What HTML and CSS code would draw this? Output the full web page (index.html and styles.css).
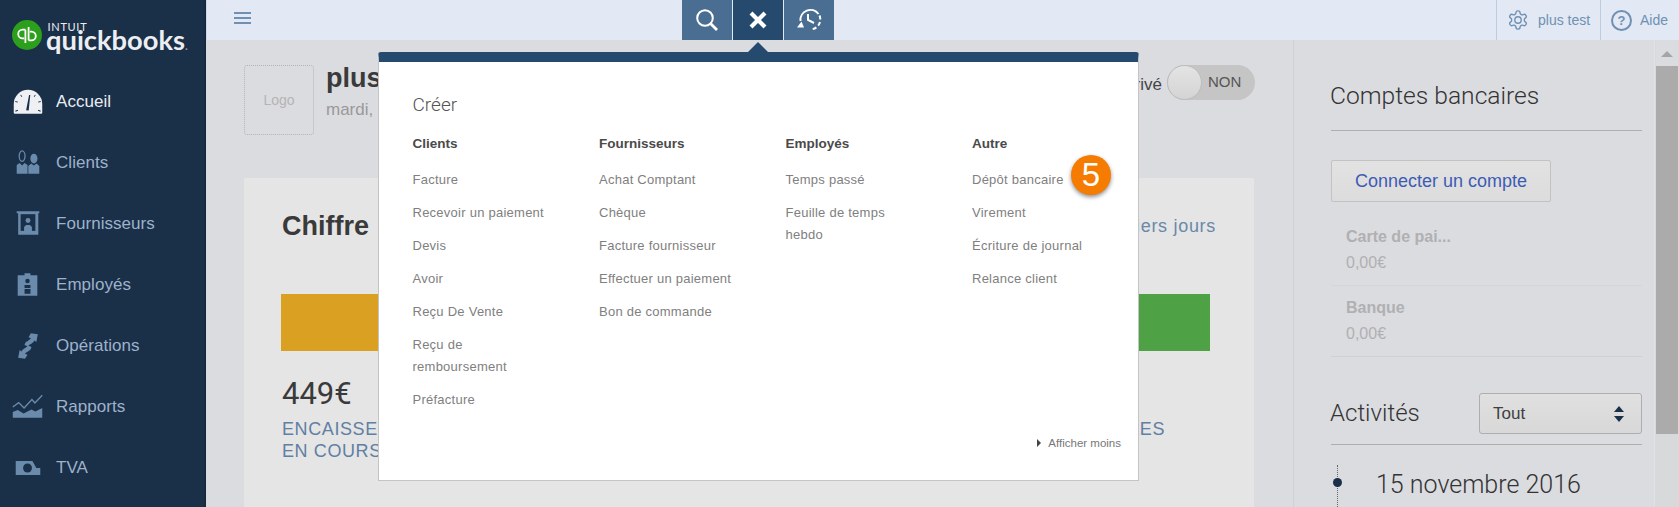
FILE: index.html
```html
<!DOCTYPE html>
<html lang="fr">
<head>
<meta charset="utf-8">
<title>QuickBooks</title>
<link rel="stylesheet" href="styles.css">
</head>
<body>
<div class="app">
  <aside class="sidebar">
    <div class="brand">
      <svg class="brand-mark" width="30" height="30" viewBox="0 0 30 30">
        <circle cx="15" cy="15" r="15" fill="#2ca01c"/>
        <g fill="none" stroke="#fff" stroke-width="1.8">
          <path d="M13.4 9.600H10.600a4.400 4.400 0 0 0 0 8.800h1.600"/>
          <path d="M13.4 9.600v13.400"/>
          <path d="M16.600 20.400h2.800a4.400 4.400 0 0 0 0-8.800h-1.600"/>
          <path d="M16.600 7v13.400"/>
        </g>
      </svg>
      <div class="brand-words">
        <span class="brand-intuit">INTUIT</span>
        <span class="brand-name">quickbooks<small class="brand-dot">.</small></span>
      </div>
    </div>
    <nav class="nav">
      <a class="nav-item nav-item-active">
        <svg class="nav-icon" viewBox="0 0 57 30"><path fill="#eef0f3" d="M14 26V17a14.500 14.500 0 0 1 29 0v9a1 1 0 0 1-1 1H15a1 1 0 0 1-1-1z"/><path fill="#1a2f48" d="M26.600 23.500l3-15.500h1.200l-1.600 15.700zM18 23l-2.500 1 .4.900 2.500-1zM39 23l2.500 1-.4.900-2.500-1zM15.500 15l2.500.6.2-.9-2.500-.6zM41.500 15l-2.500.6-.2-.9 2.500-.6zM20.600 8l1.400 2 .7-.5-1.400-2zM36.400 8l-1.400 2-.7-.5 1.400-2z"/></svg>
        <span>Accueil</span>
      </a>
      <a class="nav-item">
        <svg class="nav-icon" viewBox="0 0 57 30"><g fill="#6a8bab"><path d="M17 26v-9l3-2 2.500 2.500L25 15l3 2v9z"/><path d="M28.800 26v-8l3-2.500 2.700 2 2.700-2 2.800 2.500v8z"/><ellipse cx="34.500" cy="10.500" rx="3.600" ry="5"/></g><ellipse cx="22.500" cy="8" rx="3" ry="5.300" fill="none" stroke="#6a8bab" stroke-width="1.300"/></svg>
        <span>Clients</span>
      </a>
      <a class="nav-item">
        <svg class="nav-icon" viewBox="0 0 57 30"><path fill="#6a8bab" d="M17 2h23v2h-1v22H18.500V4H17z"/><path fill="#1a2f48" d="M21 5h15v17H21z"/><circle cx="28.500" cy="11.500" r="2.500" fill="#6a8bab"/><path fill="#6a8bab" d="M24.500 22v-4l2-2h4l2 2v4z"/></svg>
        <span>Fournisseurs</span>
      </a>
      <a class="nav-item">
        <svg class="nav-icon" viewBox="0 0 57 30"><path fill="#6a8bab" d="M18 5h7V3h6v2h7v21H18z"/><circle cx="28" cy="11" r="2.300" fill="#1a2f48"/><path fill="#1a2f48" d="M25 15h6v3h-6zM25 19h6v5h-6z"/></svg>
        <span>Employés</span>
      </a>
      <a class="nav-item">
        <svg class="nav-icon" viewBox="0 0 57 30"><g fill="#6a8bab"><path d="M25 14c.4-4 5-4.500 6.500-7L29 6l2.500-4L38.500 3 37 11l-2-1.500c-1 3-5 3.500-6.500 6z"/><path d="M32 16c-.4 4-5 4.500-6.500 7L28 24l-2.500 4L18.500 27 20 19l2 1.500c1-3 5-3.500 6.500-6z"/></g></svg>
        <span>Opérations</span>
      </a>
      <a class="nav-item">
        <svg class="nav-icon" viewBox="0 0 57 30"><path fill="none" stroke="#6a8bab" stroke-width="1.400" d="M13 15l6-4.500 5.500 5.500 8-8.500 3 3.500L43 3"/><path fill="#6a8bab" d="M13 26v-6l5-2 6 3.500 8-4 4 2 7-3.500v10z"/></svg>
        <span>Rapports</span>
      </a>
      <a class="nav-item">
        <svg class="nav-icon" viewBox="0 0 57 30"><path fill="#6a8bab" d="M16 8h17l4 7h4v7H16z"/><circle cx="28" cy="15" r="4.500" fill="#1a2f48"/></svg>
        <span>TVA</span>
      </a>
    </nav>
  </aside>

  <div class="content">
    <header class="topbar">
      <div class="hamburger"><i></i><i></i><i></i></div>
      <div class="tabs">
        <div class="tab">
          <svg width="26" height="30" viewBox="0 0 26 30"><circle cx="11" cy="13" r="7.800" fill="none" stroke="#fff" stroke-width="2"/><path d="M16.500 18.500l6.500 6.500" stroke="#fff" stroke-width="2.800" fill="none"/></svg>
        </div>
        <div class="tab tab-active">
          <svg width="20" height="20" viewBox="0 0 20 20"><path d="M3 3l14 14M17 3L3 17" stroke="#fff" stroke-width="4.200" fill="none"/></svg>
        </div>
        <div class="tab">
          <svg width="26" height="30" viewBox="0 0 26 30"><path d="M4.500 16a10 10 0 0 1 18-7" fill="none" stroke="#fff" stroke-width="2"/><path d="M23.500 10.500a10 10 0 0 1-9 13.900" fill="none" stroke="#fff" stroke-width="2" stroke-dasharray="4 2.500"/><path d="M1 22.500h7l-2.500-6z" fill="#fff"/><path d="M12 9v6l6 3" fill="none" stroke="#fff" stroke-width="2"/></svg>
        </div>
      </div>
      <div class="topbar-right">
        <div class="top-link">
          <svg class="gear" width="22" height="22" viewBox="0 0 24 24" fill="none" stroke="#6f90b3" stroke-width="1.500"><path d="M12.220 2h-.44a2 2 0 0 0-2 2v.18a2 2 0 0 1-1 1.730l-.43.25a2 2 0 0 1-2 0l-.15-.08a2 2 0 0 0-2.730.73l-.22.38a2 2 0 0 0 .73 2.730l.15.1a2 2 0 0 1 1 1.720v.51a2 2 0 0 1-1 1.740l-.15.09a2 2 0 0 0-.73 2.730l.22.38a2 2 0 0 0 2.730.73l.15-.08a2 2 0 0 1 2 0l.43.25a2 2 0 0 1 1 1.730V20a2 2 0 0 0 2 2h.44a2 2 0 0 0 2-2v-.18a2 2 0 0 1 1-1.730l.43-.25a2 2 0 0 1 2 0l.15.08a2 2 0 0 0 2.730-.73l.22-.39a2 2 0 0 0-.73-2.730l-.15-.08a2 2 0 0 1-1-1.740v-.5a2 2 0 0 1 1-1.740l.15-.09a2 2 0 0 0 .73-2.730l-.22-.38a2 2 0 0 0-2.730-.73l-.15.08a2 2 0 0 1-2 0l-.43-.25a2 2 0 0 1-1-1.730V4a2 2 0 0 0-2-2z"/><circle cx="12" cy="12" r="3.500"/></svg>
          <span>plus test</span>
        </div>
        <div class="top-link top-link-help">
          <span class="help-icon">?</span>
          <span>Aide</span>
        </div>
      </div>
    </header>

    <div class="workspace">
      <main class="main">
        <div class="company">
          <div class="logo-box">Logo</div>
          <div class="company-text">
            <div class="company-name">plus</div>
            <div class="company-date">mardi,</div>
          </div>
          <div class="privacy">
            <span class="privacy-label">Mode privé</span>
            <div class="toggle"><span class="toggle-knob"></span><span class="toggle-text">NON</span></div>
          </div>
        </div>
        <section class="card">
          <div class="card-head">
            <h2 class="card-title">Chiffre</h2>
            <span class="card-range">derniers jours</span>
          </div>
          <div class="bar">
            <div class="bar-yellow"></div>
            <div class="bar-green"></div>
          </div>
          <div class="stats">
            <div>
              <div class="stat-value">449€</div>
              <div class="stat-label">ENCAISSEMENTS<br>EN COURS</div>
            </div>
            <div class="stat-right">
              <div class="stat-value">&nbsp;</div>
              <div class="stat-label">RÉELLES</div>
            </div>
          </div>
        </section>
      </main>

      <section class="panel">
        <h2 class="panel-title">Comptes bancaires</h2>
        <button class="connect" type="button">Connecter un compte</button>
        <div class="account">
          <div class="account-name">Carte de pai...</div>
          <div class="account-value">0,00€</div>
        </div>
        <div class="account">
          <div class="account-name">Banque</div>
          <div class="account-value">0,00€</div>
        </div>
        <div class="activity-head">
          <h2 class="panel-title-plain">Activités</h2>
          <div class="select"><span>Tout</span><span class="select-caret"></span></div>
        </div>
        <div class="timeline">
          <span class="timeline-dot"></span>
          <span class="timeline-date">15 novembre 2016</span>
        </div>
      </section>

      <div class="scrollbar">
        <div class="scroll-up"><i></i></div>
        <div class="scroll-thumb"></div>
      </div>
    </div>
  </div>

  <span class="popup-arrow"></span>
  <div class="popup">
    <h3 class="popup-title">Créer</h3>
    <div class="popup-cols">
      <div class="popup-col">
        <h4>Clients</h4>
        <ul>
          <li>Facture</li>
          <li>Recevoir un paiement</li>
          <li>Devis</li>
          <li>Avoir</li>
          <li>Reçu De Vente</li>
          <li>Reçu de remboursement</li>
          <li>Préfacture</li>
        </ul>
      </div>
      <div class="popup-col">
        <h4>Fournisseurs</h4>
        <ul>
          <li>Achat Comptant</li>
          <li>Chèque</li>
          <li>Facture fournisseur</li>
          <li>Effectuer un paiement</li>
          <li>Bon de commande</li>
        </ul>
      </div>
      <div class="popup-col">
        <h4>Employés</h4>
        <ul>
          <li>Temps passé</li>
          <li>Feuille de temps hebdo</li>
        </ul>
      </div>
      <div class="popup-col">
        <h4>Autre</h4>
        <ul>
          <li>Dépôt bancaire</li>
          <li>Virement</li>
          <li>Écriture de journal</li>
          <li>Relance client</li>
        </ul>
      </div>
    </div>
    <div class="popup-foot"><span class="foot-caret"></span>Afficher moins</div>
  </div>
  <span class="step-badge">5</span>
</div>
</body>
</html>
```

FILE: styles.css
```css
* { box-sizing: border-box; }
html, body { margin: 0; padding: 0; height: 100%; overflow: hidden; }
body { font-family: "Liberation Sans", Arial, sans-serif; color: #3f3f3f; background: #dbdce0; }
h2, h3, h4, ul { margin: 0; padding: 0; font-weight: normal; }
ul { list-style: none; }

.app { position: relative; display: flex; width: 1679px; height: 507px; overflow: hidden; }

/* Sidebar */
.sidebar { flex: 0 0 206px; background: #1a2f48; box-shadow: inset -2px 0 2px -1px #14263a; }
.brand { height: 71px; display: flex; padding: 20px 0 0 12px; }
.brand-mark { flex: none; }
.brand-words { display: flex; flex-direction: column; margin-left: 4px; color: #eceef1; }
.brand-intuit { font: 400 11px/10px "Lato", sans-serif; letter-spacing: .7px; height: 10px; margin: 2px 0 0 1.500px; }
.brand-name { font: 700 27.300px/28px "Lato", sans-serif; margin-top: -6px; white-space: nowrap; }
.brand-dot { font-size: 12px; color: #8a9bb0; }
.nav-item { display: flex; align-items: center; height: 61px; color: #9db2cb; font-size: 17px; letter-spacing: .05px; }
.nav-item-active { color: #e9edf2; }
.nav-icon { flex: none; width: 56px; height: 30px; overflow: visible; }

/* Top bar */
.content { flex: 1; min-width: 0; display: flex; flex-direction: column; }
.topbar { flex: 0 0 40px; display: flex; background: #e2e9f4; border-left: 1px solid #cfd9e6; }
.hamburger { width: 17px; margin: 12px 0 0 27px; display: flex; flex-direction: column; gap: 3px; }
.hamburger i { display: block; height: 2px; background: #6f90b3; }
.tabs { display: flex; margin-left: 431px; gap: 1px; }
.tab { width: 50px; height: 40px; background: #4a6d92; display: flex; align-items: center; justify-content: center; }
.tab-active { background: #264a6e; }
.topbar-right { margin-left: auto; display: flex; font-size: 14px; color: #6f90b3; }
.top-link { display: flex; align-items: center; gap: 9px; width: 104px; padding-left: 10px; border-left: 1px solid #bccde0; }
.top-link-help { width: 79px; gap: 8px; }
.help-icon { flex: none; width: 21px; height: 21px; border: 2px solid #6f90b3; border-radius: 50%; display: flex; align-items: center; justify-content: center; font-weight: 700; font-size: 13px; }

/* Main */
.workspace { flex: 1; display: flex; min-height: 0; }
.main { flex: 0 0 1087px; padding: 25px 39px 0 38px; }
.company { display: flex; height: 70px; }
.logo-box { width: 70px; height: 70px; border: 1px dotted #b3b3b5; border-radius: 3px; display: flex; align-items: center; justify-content: center; color: #b4b4b6; font-size: 14px; }
.company-text { margin: -3px 0 0 12px; }
.company-name { font-size: 27px; font-weight: 700; line-height: 32px; color: #3a3a3a; }
.company-date { margin-top: 5px; font-size: 17px; line-height: 22px; color: #999; }
.privacy { margin: 0 -1px 0 auto; display: flex; align-items: flex-start; gap: 5px; }
.privacy-label { margin-top: 10px; font-size: 17px; line-height: 20px; color: #444; }
.toggle { width: 88px; height: 35px; border-radius: 18px; background: #c5c5c5; display: flex; align-items: center; }
.toggle-knob { width: 35px; height: 35px; border-radius: 50%; background: linear-gradient(#e4e4e4, #d4d4d4); border: 1px solid #bdbdbd; }
.toggle-text { margin: -3px 0 0 6px; font-size: 15px; color: #555; }

.card { margin-top: 43px; height: 340px; background: #e5e5e5; padding: 32px 44px 0 37px; }
.card-head { display: flex; justify-content: space-between; align-items: center; height: 32px; }
.card-title { margin-left: 1px; font-size: 27px; font-weight: 700; color: #3a3a3a; }
.card-range { margin-right: -6px; font-size: 18px; letter-spacing: .7px; color: #6a88a8; }
.bar { display: flex; height: 57px; margin-top: 52px; }
.bar-yellow { flex: 1; background: #d9a022; }
.bar-green { flex: 0 0 300px; background: #4ea145; }
.stats { display: flex; justify-content: space-between; margin-top: 25px; padding-left: 1px; }
.stat-value { font: 400 31px/36px "Roboto", sans-serif; color: #3a3a3a; }
.stat-label { margin-top: 6px; font-size: 18px; line-height: 22px; letter-spacing: .6px; color: #5f7fa3; }
.stat-right { margin-right: 45px; }

/* Right panel */
.panel { flex: 0 0 361px; padding: 40px 12px 0 37px; border-left: 1px solid #cfd0d4; }
.panel-title { font: 300 24.600px/32px "Roboto", sans-serif; color: #333; padding-bottom: 18px; border-bottom: 1px solid #aeaeae; height: 51px; text-indent: -1px; }
.connect { display: block; margin-top: 29px; width: 220px; height: 42px; padding: 0; font: 18px "Liberation Sans", Arial, sans-serif; color: #3c5cb4; background: linear-gradient(#e2e2e3, #dcdcdc); border: 1px solid #c2c2c2; border-radius: 2px; }
.account { padding: 0 0 12px 15px; border-bottom: 1px solid #cfd0d4; margin-top: 12px; }
.connect + .account { margin-top: 25px; border-bottom-color: #d5d6da; }
.account-name { font-size: 16px; font-weight: 700; line-height: 20px; color: #b0b0b2; }
.account-value { margin-top: 6px; font-size: 16px; line-height: 20px; color: #b0b0b2; }
.activity-head { margin-top: 36px; padding-bottom: 10px; border-bottom: 1px solid #aeaeae; display: flex; justify-content: space-between; align-items: center; }
.panel-title-plain { font: 300 24px/30px "Roboto", sans-serif; color: #333; text-indent: -1px; padding-bottom: 2px; }
.select { width: 163px; height: 41px; padding: 0 17px 0 13px; display: flex; align-items: center; justify-content: space-between; border: 1px solid #aeaeae; border-radius: 3px; font-size: 17px; color: #3f3f3f; background: linear-gradient(#e0e0e1, #d8d8d8); }
.select-caret { position: relative; width: 10px; height: 16px; }
.select-caret::before, .select-caret::after { content: ""; position: absolute; left: 0; border-left: 5px solid transparent; border-right: 5px solid transparent; }
.select-caret::before { top: 0; border-bottom: 6px solid #1a2f48; }
.select-caret::after { bottom: 0; border-top: 6px solid #1a2f48; }
.timeline { position: relative; margin-top: 25px; padding-left: 45px; font: 300 25px/30px "Roboto", sans-serif; color: #333; }
.timeline::before { content: ""; position: absolute; left: 6px; top: -5px; height: 60px; border-left: 1px dotted #666; }
.timeline-dot { position: absolute; left: 2px; top: 8px; width: 9px; height: 9px; border-radius: 50%; background: #1a2f48; }

/* Scrollbar */
.scrollbar { flex: 1; background: #d8d9db; border-left: 1px solid #e1e2e4; padding: 0 1px 0 1px; }
.scroll-up { height: 26px; display: flex; justify-content: center; padding-top: 11px; background: #dbdce0; }
.scroll-up i { width: 0; height: 0; border-left: 6px solid transparent; border-right: 6px solid transparent; border-bottom: 6px solid #a5a5a5; }
.scroll-thumb { height: 368px; background: #ababab; }

/* Create popup */
.popup-arrow { position: absolute; left: 748px; top: 42px; width: 0; height: 0; border-left: 10px solid transparent; border-right: 10px solid transparent; border-bottom: 10px solid #264a6e; }
.popup { position: absolute; left: 378px; top: 52px; width: 761px; height: 429px; display: flex; flex-direction: column; padding: 31px 17px 29px 33.500px; background: #fff; border: 1px solid #c4c4c4; border-top: 10px solid #264a6e; border-radius: 3px 3px 0 0; }
.popup-title { font: 300 19px/24px "Roboto", sans-serif; color: #555; }
.popup-cols { display: flex; margin-top: 17px; }
.popup-col { flex: 0 0 186.500px; }
.popup-col h4 { font-size: 13.500px; font-weight: 700; line-height: 20px; color: #4a4a4a; }
.popup-col ul { margin-top: 15px; display: flex; flex-direction: column; gap: 11.400px; }
.popup-col li { max-width: 138px; font-size: 13px; line-height: 21.600px; letter-spacing: .25px; color: #808080; }
.popup-foot { margin-top: auto; align-self: flex-end; display: flex; align-items: center; font-size: 11.500px; line-height: 16px; color: #777; }
.foot-caret { width: 0; height: 0; margin-right: 7px; border-top: 4px solid transparent; border-bottom: 4px solid transparent; border-left: 4px solid #444; }
.step-badge { position: absolute; left: 1071px; top: 155px; width: 40px; height: 40px; border-radius: 50%; background: #f57c00; color: #fff; font-size: 33px; line-height: 40px; text-align: center; box-shadow: 0 2px 4px rgba(0,0,0,.45); }
```
